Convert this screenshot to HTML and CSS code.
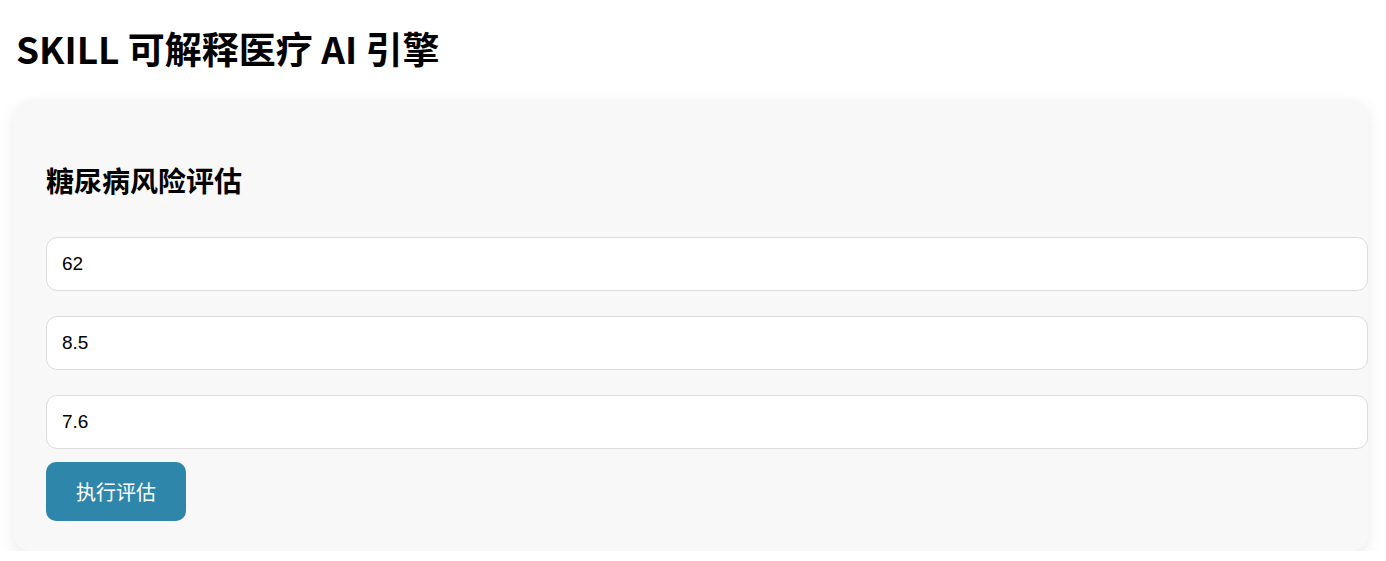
FILE: index.html
```html
<!DOCTYPE html>
<html lang="zh-CN">
<head>
    <meta charset="UTF-8">
    <meta name="viewport" content="width=device-width, initial-scale=1.0">
    <title>SKILL 可解释医疗 AI 引擎</title>
    <link rel="stylesheet" href="styles.css">
</head>
<body>
    <h1 class="page-title">SKILL 可解释医疗 AI 引擎</h1>

    <div class="card">
        <h2 class="card-title">糖尿病风险评估</h2>

        <input type="text" class="field" id="age" value="62">
        <input type="text" class="field" id="hba1c" value="8.5">
        <input type="text" class="field" id="glucose" value="7.6">

        <button class="run-btn" onclick="runAssessment()">执行评估</button>
    </div>

    <script>
        function runAssessment() {
            // placeholder
        }
    </script>
</body>
</html>
```

FILE: styles.css
```css
* {
    box-sizing: content-box;
}

body {
    margin: 0;
    padding: 0 18px 0 14px;
    background-color: #ffffff;
    font-family: "Liberation Sans", Arial, "Noto Sans CJK SC", sans-serif;
    color: #000;
}

.page-title {
    font-family: "Noto Sans CJK SC", sans-serif;
    font-size: 37px;
    font-weight: 700;
    line-height: 50px;
    margin: 23px 0 27px 2px;
}

.card {
    background-color: #f8f8f8;
    border-radius: 16px;
    box-shadow: 0 5px 16px rgba(0, 0, 0, 0.09);
    padding: 32px 32px 30px 32px;
    display: flex;
    flex-direction: column;
    align-items: flex-start;
}

.card-title {
    font-family: "Noto Sans CJK SC", sans-serif;
    font-size: 28px;
    font-weight: 700;
    line-height: 40px;
    margin: 28px 0 37px 0;
}

.field {
    width: 100%;
    padding: 15px;
    font-size: 19px;
    line-height: 22px;
    font-family: "Liberation Sans", Arial, sans-serif;
    border: 1px solid #dcdcdc;
    border-radius: 11px;
    background: #fff;
    margin: 0 0 25px 0;
    outline: none;
}

.field:last-of-type {
    margin-bottom: 13px;
}

.run-btn {
    background-color: #2e86ab;
    color: #fff;
    border: none;
    border-radius: 10px;
    font-family: "Noto Sans CJK SC", sans-serif;
    font-size: 20px;
    line-height: 27px;
    padding: 16px 30px;
    cursor: pointer;
}
```
